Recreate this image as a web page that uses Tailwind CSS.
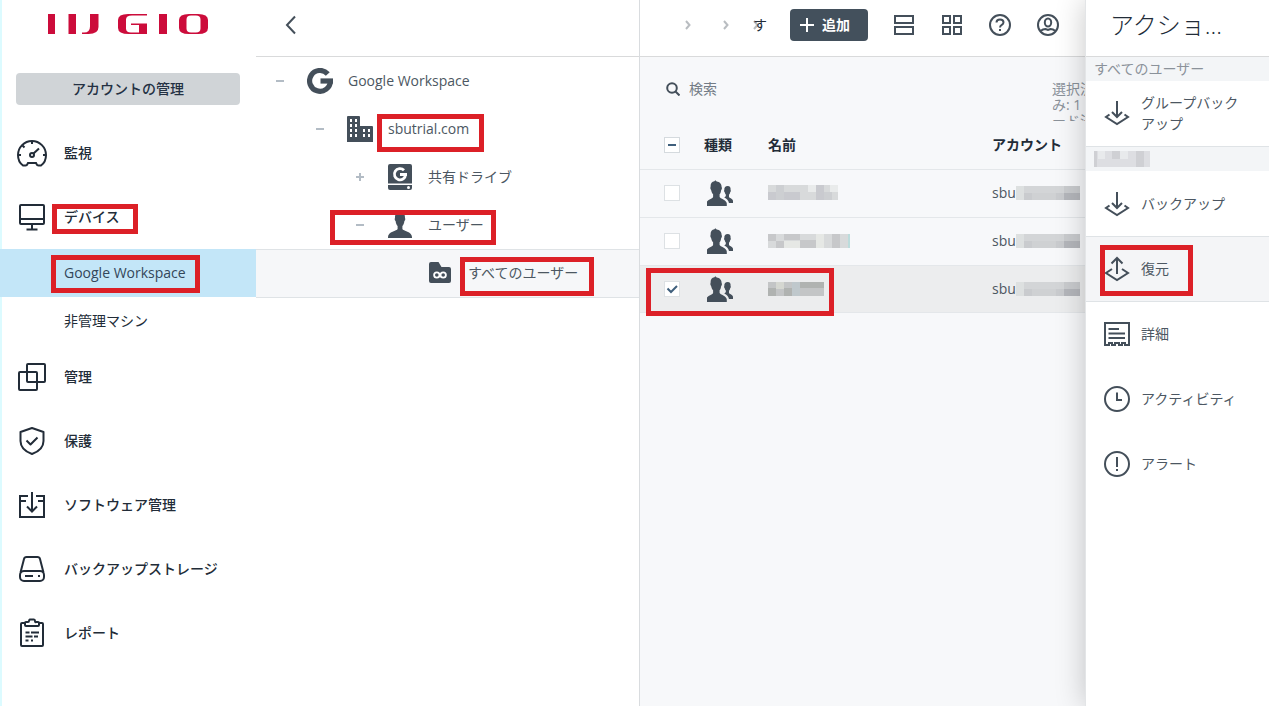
<!DOCTYPE html>
<html lang="ja">
<head>
    <meta charset="UTF-8">
    <meta name="viewport" content="width=device-width, initial-scale=1.0">
    <title>Google Workspace - すべてのユーザー</title>
    <script src="https://cdn.jsdelivr.net/npm/@tailwindcss/browser@4"></script>
</head>
<body class="flex h-screen overflow-hidden bg-white font-['Open_Sans','Noto_Sans_CJK_JP',sans-serif] text-sm text-[#4c5762]">

    <!-- shared symbols -->
    <svg class="hidden">
        <symbol id="users" viewBox="0 0 26 26">
            <path fill="#444f5a" d="M9.5 0.3 8.6 1.3C6 1.6 4.6 3.6 4.8 7c-.6.8-.2 2.4.5 3 .4 2 1 3.200 2 4.200V17c-.4 1.600-6.800 3-7 6.500V26h20.700v-2.500C20.800 20 14.300 18.600 13.800 17v-2.800c1-1 1.300-2.200 1.600-4.200.8-.6 1-2.200.4-3C15.900 4 14 1.500 10.900 1.400z" transform="translate(-1.2 0)"/>
            <path fill="#444f5a" d="M20.700 6c-2.300 0-3.600 1.600-3.400 4-.4.700-.2 1.600.4 2.200.2 1.200.7 2 1.200 2.600 0 1.500-.4 2-1.700 2.700 2.700 1.400 4.200 3 4.800 5.500h4V21c0-2.200-2.800-2.800-4-3.800v-2.400c.6-.6 1-1.400 1.200-2.600.600-.6.800-1.500.4-2.200.2-2.400-.7-4-2.900-4z"/>
        </symbol>
        <symbol id="backup" viewBox="0 0 26 26">
            <g fill="none" stroke="#444f5a" stroke-width="2"><path d="M13 1v16M8 12l5 5 5-5"/><path d="M5.500 14.500 2 17l11 7 11-7-3.500-2.500"/></g>
        </symbol>
        <symbol id="mosaic" viewBox="0 0 64 14">
            <path fill="#dde0e0" d="M0 0h8v14H0z"/><path fill="#d3d5d7" d="M8 0h40v7H8z"/><path fill="#c9cbce" d="M8 7h8v7H8zM40 7h8v7h-8zM48 0h16v7H48z"/><path fill="#cfd1d3" d="M16 7h24v7H16z"/><path fill="#b4b6bb" d="M48 7h16v7H48z"/>
        </symbol>
    </svg>

    <!-- sidebar -->
    <aside class="w-64 shrink-0 shadow-[inset_2px_0_0_#dcfbff]">
        <a href="#" aria-label="IIJ GIO" class="flex h-[73px] pl-12 pt-[14px]">
            <svg class="h-5 w-40" viewBox="0 0 160 20" fill="#cc0c3b">
                <path d="M0 0h7v20H0zM20.500 0H28v20h-7.500zM111 0h8v20h-8z"/>
                <path d="M42 0h8.500v13q0 7-10 7H34v-1.500h2q6 0 6-6z"/>
                <path fill-rule="evenodd" d="M80 0h19v1.500H84q-6 0-6 4v9q0 4 5 4h8V11h-8V9.500h16V20H81q-11 0-11-6V6q0-6 10-6zM141 0h9q10 0 10 6v8q0 6-10 6h-9q-10 0-10-6V6q0-6 10-6zm2 1.500q-4.500 0-4.500 4v9q0 4 4.500 4h5q4.500 0 4.500-4v-9q0-4-4.500-4z"/>
            </svg>
        </a>
        <div class="mb-4 px-4">
            <button class="h-8 w-full rounded bg-[#d0d4d7] font-medium text-[#243143]">アカウントの管理</button>
        </div>
        <nav class="font-medium text-[#222c38]">
            <a href="#" class="flex h-16 items-center gap-4 px-4">
                <svg class="size-8" viewBox="0 0 32 32" fill="none" stroke="currentColor" stroke-width="2">
                    <path d="M7 28.500C3.500 26 2 22 2 18a14 14 0 0 1 28 0c0 4-1.500 8-5 10.500h-2.500q-1.500 0-2-1.500l-.5-1H12l-.5 1q-.500 1.500-2 1.500z"/>
                    <path d="M16 4v3M2 18h3M27 18h3M6.500 8.500l2 2M17.500 16.500l5.500-5"/><circle cx="16" cy="18" r="2"/>
                </svg>
                監視
            </a>
            <a href="#" class="flex h-16 items-center gap-4 px-4">
                <svg class="size-8" viewBox="0 0 32 32" fill="none" stroke="currentColor" stroke-width="2">
                    <rect x="4" y="4" width="24" height="19" rx="1"/><path d="M4 18h24M16 23v5M10.500 28.500h11"/>
                </svg>
                <span class="relative">デバイス<span class="absolute -left-3 -top-[3px] h-[30px] w-[86px] border-5 border-[#dc2027]"></span></span>
            </a>
            <a href="#" class="flex h-12 items-center bg-[#c3e6f8] pl-16 font-normal text-[#33475a]">
                <span class="relative">Google Workspace<span class="absolute -left-[13px] -top-2 h-[38px] w-[149px] border-5 border-[#dc2027]"></span></span>
            </a>
            <a href="#" class="flex h-12 items-center pl-16 font-normal">非管理マシン</a>
            <a href="#" class="flex h-16 items-center gap-4 px-4">
                <svg class="size-8" viewBox="0 0 32 32" fill="none" stroke="currentColor" stroke-width="2">
                    <rect x="3" y="11" width="18" height="18" rx="1"/><rect x="11" y="3" width="18" height="18" rx="1"/>
                </svg>
                管理
            </a>
            <a href="#" class="flex h-16 items-center gap-4 px-4">
                <svg class="size-8" viewBox="0 0 32 32" fill="none" stroke="currentColor" stroke-width="2" stroke-linejoin="round">
                    <path d="M16 3 27.500 7v9c0 6-4.500 10.500-11.500 13C9 26.500 4.500 22 4.500 16V7z"/><path d="m10.500 15.500 4 4 7-7"/>
                </svg>
                保護
            </a>
            <a href="#" class="flex h-16 items-center gap-4 px-4">
                <svg class="size-8" viewBox="0 0 32 32" fill="none" stroke="currentColor" stroke-width="2">
                    <path d="M12 7H4v21h24V7h-8M4 12h6M22 12h6M16 3v19M11 17.500l5 5 5-5"/>
                </svg>
                ソフトウェア管理
            </a>
            <a href="#" class="flex h-16 items-center gap-4 px-4">
                <svg class="size-8" viewBox="0 0 32 32" fill="none" stroke="currentColor" stroke-width="2">
                    <path d="M4.500 19.500 8 6q.5-2 2.500-2h11q2 0 2.500 2l3.500 13.500"/><rect x="4" y="18" width="24" height="10" rx="4"/><path d="M9 23h8M22 23h2"/>
                </svg>
                バックアップストレージ
            </a>
            <a href="#" class="flex h-16 items-center gap-4 px-4">
                <svg class="size-8" viewBox="0 0 32 32" fill="none" stroke="currentColor" stroke-width="2" stroke-linejoin="round">
                    <path d="M9 6H6q-1 0-1 1v21q0 1 1 1h20q1 0 1-1V7q0-1-1-1h-3"/><path d="M9 8V6q0-1 1-1h2q1 0 1-1t1-1.500h4q1 0 1 1.500t1 1h2q1 0 1 1v2q0 1-1 1H10q-1 0-1-1z"/><path d="M9.500 15.500h4M15 15.500h8M9.500 19.500h7M18 19.500h4M9.500 23.500h3M15 23.500h2"/>
                </svg>
                レポート
            </a>
        </nav>
    </aside>

    <!-- device tree -->
    <section class="w-96 shrink-0 border-r border-[#d9dcdf]">
        <header class="flex h-[57px] items-center border-b border-[#d9dadb] px-6 pb-[6px]">
            <button aria-label="戻る" class="flex h-8 w-[22px] items-center justify-center">
                <svg class="h-5 w-3" viewBox="0 0 12 20" fill="none" stroke="#444f5a" stroke-width="2"><path d="M10 1.500 2 10l8 8.500"/></svg>
            </button>
        </header>
        <ul>
            <li class="flex h-12 items-center pl-3">
                <button aria-label="閉じる" class="flex w-6 justify-center"><span class="h-0.5 w-2 bg-[#b3bcc5]"></span></button>
                <span class="flex w-14 justify-center">
                    <svg class="size-[26px]" viewBox="0 0 26 26" fill="none" stroke="#444f5a" stroke-width="5.200"><path d="M20.800 6A10.400 10.400 0 1 0 23.400 13"/><path d="M13.500 13H26"/></svg>
                </span>
                Google Workspace
            </li>
            <li class="flex h-12 items-center pl-13">
                <button aria-label="閉じる" class="flex w-6 justify-center"><span class="h-0.5 w-2 bg-[#b3bcc5]"></span></button>
                <span class="flex w-14 justify-center">
                    <svg class="size-[26px]" viewBox="0 0 26 26"><path fill="#444f5a" d="M1 0h11q1 0 1 1v9h12q1 0 1 1v15H0V1q0-1 1-1z"/><path fill="#fff" d="M3 3h2v3H3zM8 3h2v3H8zM3 8h2v3H3zM8 8h2v3H8zM3 13h2v3H3zM8 13h2v3H8zM3 18h2v3H3zM8 18h2v3H8zM16 13h2v3h-2zM21 13h2v3h-2zM16 18h2v3h-2zM21 18h2v3h-2z"/></svg>
                </span>
                <span class="relative">sbutrial.com<span class="absolute -left-[11px] -top-[5px] h-[38px] w-[107px] border-5 border-[#dc2027]"></span></span>
            </li>
            <li class="flex h-12 items-center pl-23">
                <button aria-label="開く" class="flex w-6 justify-center"><svg class="size-2" viewBox="0 0 8 8" stroke="#b3bcc5" stroke-width="2"><path d="M4 0v8M0 4h8"/></svg></button>
                <span class="flex w-14 justify-center">
                    <svg class="h-[26px] w-6" viewBox="0 0 24 26"><path fill="#444f5a" d="M2 0h20q2 0 2 2v17.500H0V2q0-2 2-2zM0 21h24v3q0 2-2 2H2q-2 0-2-2z"/><path fill="none" stroke="#fff" stroke-width="2.800" d="M16 6.300A5.600 5.600 0 1 0 17.600 10.500M12 10.500h7"/><circle cx="20.500" cy="23.500" r="1.500" fill="#fff"/></svg>
                </span>
                共有ドライブ
            </li>
            <li class="relative flex h-12 items-center pl-23">
                <button aria-label="閉じる" class="flex w-6 justify-center"><span class="h-0.5 w-2 bg-[#b3bcc5]"></span></button>
                <span class="flex w-14 justify-center">
                    <svg class="h-[26px] w-6" viewBox="0 0 24 26"><path fill="#444f5a" d="M12 0C8.500 0 6.800 2.500 7 6c-.6 1-.2 2.500.6 3 .3 2.500 1 4 2 5v3C9 19 0 19.500 0 25v1h24v-1c0-5.500-9-6-9.600-8v-3c1-1 1.700-2.500 2-5 .8-.5 1.200-2 .6-3 .2-3.500-1.500-6-5-6z"/></svg>
                </span>
                ユーザー
                <span class="absolute left-[74px] top-[9px] h-[35px] w-[166px] border-5 border-[#dc2027]"></span>
            </li>
            <li class="flex h-[49px] items-center border-y border-[#dfe3e6] bg-[#f6f7f9] pb-0.5 pl-39">
                <span class="flex w-14 justify-center">
                    <svg class="h-[21px] w-[22px]" viewBox="0 0 22 21"><path fill="#444f5a" d="M2 0h7.500l3 5H20q2 0 2 2v12q0 2-2 2H2q-2 0-2-2V2q0-2 2-2z"/><g fill="none" stroke="#fff" stroke-width="1.800"><circle cx="7.800" cy="13" r="2.700"/><circle cx="14.200" cy="13" r="2.700"/></g></svg>
                </span>
                <span class="relative">すべてのユーザー<span class="absolute -left-2 -top-[6px] h-[39px] w-[134px] border-5 border-[#dc2027]"></span></span>
            </li>
        </ul>
    </section>

    <!-- user list -->
    <main class="min-w-0 flex-1 overflow-hidden bg-[#f7f8fa]">
        <header class="flex h-[57px] items-center border-b border-[#d9dadb] bg-white pb-[6px]">
            <nav class="flex flex-1 items-center pl-[45px] text-[#222c38]">
                <svg class="mr-8 h-2.5 w-1.5 shrink-0" viewBox="0 0 6 10" fill="none" stroke="#b9bdc1" stroke-width="2"><path d="m1 1 3.500 4L1 9"/></svg>
                <svg class="mr-6 h-2.5 w-1.5 shrink-0" viewBox="0 0 6 10" fill="none" stroke="#b9bdc1" stroke-width="2"><path d="m1 1 3.500 4L1 9"/></svg>
                <svg class="h-2.5 w-1.5 shrink-0" viewBox="0 0 6 10" fill="none" stroke="#b9bdc1" stroke-width="2"><path d="m1 1 3.500 4L1 9"/></svg>
                <a href="#" class="-ml-1.5 shrink-0">す</a>
            </nav>
            <button class="mr-[25px] flex h-8 items-center gap-2 rounded bg-[#43505c] pl-2.5 pr-[18px] font-bold text-white">
                <svg class="size-[14px]" viewBox="0 0 14 14" stroke="currentColor" stroke-width="2"><path d="M7 0v14M0 7h14"/></svg>
                追加
            </button>
            <div class="flex gap-[26px] pr-[26px]">
                <button aria-label="リスト"><svg class="size-[22px]" viewBox="0 0 22 22" fill="none" stroke="#444f5a" stroke-width="2"><path d="M2 2h18v7H2zM2 13h18v7H2z"/></svg></button>
                <button aria-label="グリッド"><svg class="size-[22px]" viewBox="0 0 22 22" fill="none" stroke="#444f5a" stroke-width="2"><path d="M2 2h7v7H2zM13 2h7v7h-7zM2 13h7v7H2zM13 13h7v7h-7z"/></svg></button>
                <button aria-label="ヘルプ"><svg class="size-[22px]" viewBox="0 0 22 22" fill="none" stroke="#444f5a" stroke-width="2"><circle cx="11" cy="11" r="10"/><path d="M7.500 8.500Q7.500 5.500 11 5.500t3.500 2.800q0 1.500-1.700 2.500T11 13.500M11 15v2"/></svg></button>
                <button aria-label="アカウント"><svg class="size-[22px]" viewBox="0 0 22 22" fill="none" stroke="#444f5a" stroke-width="2"><circle cx="11" cy="11" r="10"/><ellipse cx="11" cy="8.500" rx="3.200" ry="4"/><path d="M3.500 17q2.500-2 5-2l2.500 1 2.500-1q2.500 0 5 2"/></svg></button>
            </div>
        </header>
        <div class="flex h-16 justify-between pl-[26px] pt-6">
            <label class="flex h-4 items-center gap-[9px]">
                <svg class="size-[14px]" viewBox="0 0 14 14" fill="none" stroke="#444f5a" stroke-width="2"><circle cx="6" cy="6" r="4.800"/><path d="m9.500 9.500 4 4"/></svg>
                <input type="text" placeholder="検索" class="w-40 bg-transparent outline-none placeholder:text-[#737c86]">
            </label>
            <p class="h-10 w-[33px] overflow-hidden whitespace-nowrap leading-4 text-[#8b929a]">選択済<br>み: 1<br>ード済</p>
        </div>
        <table class="w-full table-fixed border-separate border-spacing-0 text-left">
            <colgroup><col class="w-16"><col class="w-16"><col class="w-56"><col></colgroup>
            <thead class="text-[#222c38]">
                <tr class="h-12">
                    <th class="pl-6"><span class="relative block size-4"><input type="checkbox" aria-label="すべて選択" class="block size-4 appearance-none border border-[#d5dade] bg-white"><span class="absolute left-1 top-[7px] h-0.5 w-2 bg-[#3f5f7c]"></span></span></th>
                    <th>種類</th>
                    <th>名前</th>
                    <th>アカウント</th>
                </tr>
            </thead>
            <tbody class="*:h-12 [&_td]:border-t [&_td]:border-[#e4e7ea]">
                <tr class="[&_td]:pb-0.5">
                    <td class="pl-6"><input type="checkbox" aria-label="ユーザー 1" class="block size-4 appearance-none border border-[#dde1e4] bg-white"></td>
                    <td><svg class="ml-[3px] size-[26px]"><use href="#users"/></svg></td>
                    <td><svg class="h-[15px] w-[70px]" viewBox="0 0 70 15"><path fill="#d8dadb" d="M0 0h70v15H0z"/><path fill="#c9cacf" d="M0 7h8v8H0zM16 7h16v8H16zM48 0h8v15h-8z"/><path fill="#cdcfd2" d="M8 0h8v15H8zM56 7h8v8h-8z"/><path fill="#e9ebeb" d="M40 0h8v7h-8zM62 0h8v7h-8z"/></svg></td>
                    <td><span class="flex items-center">sbu<svg class="h-[14px] w-16"><use href="#mosaic"/></svg></span></td>
                </tr>
                <tr class="[&_td]:pb-0.5">
                    <td class="pl-6"><input type="checkbox" aria-label="ユーザー 2" class="block size-4 appearance-none border border-[#dde1e4] bg-white"></td>
                    <td><svg class="ml-[3px] size-[26px]"><use href="#users"/></svg></td>
                    <td><svg class="h-[14px] w-[82px]" viewBox="0 0 82 14"><path fill="#d8dadb" d="M0 0h82v14H0z"/><path fill="#c7c8ca" d="M0 0h8v7H0zM16 0h16v6H16zM8 7h8v7H8zM32 6h16v8H32zM64 0h8v14h-8z"/><path fill="#e6e8e5" d="M16 7h16v7H16zM48 0h8v14h-8z"/><path fill="#bcdcdc" d="M80 0h2v14h-2z"/></svg></td>
                    <td><span class="flex items-center">sbu<svg class="h-[14px] w-16"><use href="#mosaic"/></svg></span></td>
                </tr>
                <tr class="bg-[#ecedee] [&_td]:border-b [&_td]:border-[#dcdfe2]">
                    <td class="pl-6"><span class="relative block size-4"><input type="checkbox" checked aria-label="ユーザー 3" class="block size-4 appearance-none border border-[#dde1e4] bg-white"><svg class="pointer-events-none absolute left-0 top-0 size-4" viewBox="0 0 16 16" fill="none" stroke="#3f5f7c" stroke-width="2"><path d="m3.500 7.500 3.500 3.500 6-6"/></svg></span></td>
                    <td class="relative"><svg class="ml-[3px] size-[26px]"><use href="#users"/></svg><span class="absolute -left-[58px] top-[2px] h-12 w-[188px] border-5 border-[#dc2027]"></span></td>
                    <td><svg class="h-[14px] w-14" viewBox="0 0 56 14"><path fill="#c3c5c6" d="M0 0h56v14H0z"/><path fill="#b0b3b1" d="M0 6h8v8H0zM16 6h8v8h-8zM32 0h24v6H32z"/><path fill="#d5d7d1" d="M8 0h8v7H8z"/><path fill="#bfc8cc" d="M24 0h8v14h-8z"/></svg></td>
                    <td><span class="flex items-center">sbu<svg class="h-[14px] w-16"><use href="#mosaic"/></svg></span></td>
                </tr>
            </tbody>
        </table>
    </main>

    <!-- actions panel -->
    <aside class="z-10 w-46 shrink-0 border-l border-[#e3e5e7] bg-white shadow-[0_0_28px_rgba(0,0,0,0.22)]">
        <header class="flex h-[57px] items-center border-b border-[#d9dadb] pb-[6px] pl-6">
            <h2 class="text-2xl font-light text-[#222c38]">アクショ...</h2>
        </header>
        <h3 class="flex h-6 items-center bg-[#f3f5f7] pl-2 text-[#8b929a]">すべてのユーザー</h3>
        <button class="flex h-[66px] w-full items-center gap-[11px] border-b border-[#dfe3e6] pb-0.5 pl-[18px] text-left leading-[21px]">
            <svg class="size-[26px] shrink-0"><use href="#backup"/></svg>グループバック<br>アップ
        </button>
        <div class="flex h-6 items-center bg-[#f3f5f7] pl-2">
            <svg class="h-4 w-14" viewBox="0 0 56 16"><path fill="#dddee2" d="M0 0h56v16H0z"/><path fill="#cfd0d4" d="M0 0h3v16H0zM18 0h8v8h-8zM42 0h8v16h-8z"/><path fill="#e8eaec" d="M4 0h7v8H4zM26 0h8v8h-8z"/></svg>
        </div>
        <button class="flex h-[65px] w-full items-center gap-[11px] pl-[18px]">
            <svg class="size-[26px]"><use href="#backup"/></svg>バックアップ
        </button>
        <button class="relative flex h-[66px] w-full items-center gap-[11px] border-y border-[#dfe3e6] bg-[#f4f5f7] pl-[18px]">
            <svg class="size-[26px]" viewBox="0 0 26 26" fill="none" stroke="#444f5a" stroke-width="2"><path d="M13 18V2M7.500 7.500 13 2l5.500 5.500"/><path d="M8 13l-6 4 11 7 11-7-6-4"/></svg>復元
            <span class="absolute left-[14px] top-2 h-[51px] w-[93px] border-5 border-[#dc2027]"></span>
        </button>
        <button class="flex h-16 w-full items-center gap-[11px] pl-[18px]">
            <svg class="size-[26px]" viewBox="0 0 26 26" fill="none" stroke="#444f5a" stroke-width="2"><path d="M1 24V2h24v22h-4v-2h-3v2h-3v-2h-4v2H8v-2H5v2zM4.500 8H15M4.500 12.500H21M4.500 17H21"/></svg>詳細
        </button>
        <button class="flex h-[65px] w-full items-center gap-[11px] pl-[18px]">
            <svg class="size-[26px]" viewBox="0 0 26 26" fill="none" stroke="#444f5a" stroke-width="2"><circle cx="13" cy="13" r="12"/><path d="M13 6.500V14h5"/></svg>アクティビティ
        </button>
        <button class="flex h-[65px] w-full items-center gap-[11px] pl-[18px]">
            <svg class="size-[26px]" viewBox="0 0 26 26" fill="none" stroke="#444f5a" stroke-width="2"><circle cx="13" cy="13" r="12"/><path d="M13 6v10M13 18v2"/></svg>アラート
        </button>
    </aside>

</body>
</html>
